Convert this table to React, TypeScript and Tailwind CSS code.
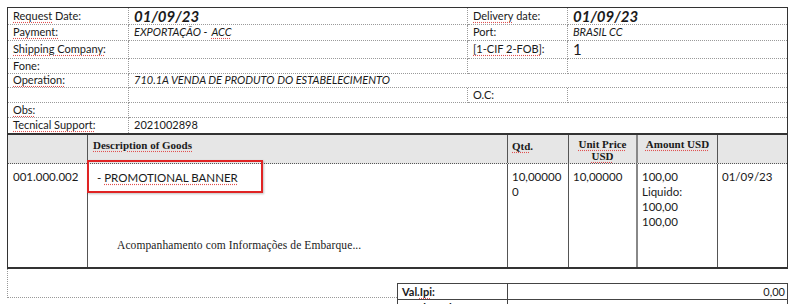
import type { ReactNode } from 'react'

// spell-check style underline seen on the printed form
const spell = 'underline decoration-dotted decoration-[#e05050] underline-offset-2'
const sans = "font-['Lato','Liberation_Sans',sans-serif]"
const serif = "font-['Liberation_Serif','Times_New_Roman',serif]"

const Cell = ({ children, className = '' }: { children?: ReactNode; className?: string }) => (
  <div className={`flex items-center px-[5px] border-b border-dotted border-[#9a9a9a] ${className}`}>
    {children}
  </div>
)

export default function App() {
  return (
    <div className={`w-[800px] h-[304px] overflow-hidden bg-white text-[#1a1a1a] ${sans} text-[11px]`}>
      <div className="pt-[7px] pl-[7px]">
        {/* header block */}
        <div className="w-[781px] border-t border-l border-r border-[#333]">
          <div className="grid grid-cols-[121px_339px_100px_219px] [grid-template-rows:17px_16px_18px_15px_14px_15px_15px_15px]">
            <Cell className="border-r"><span className={spell}>Request</span>&nbsp;Date:</Cell>
            <Cell className="border-r text-[15px] font-bold italic">01/09/23</Cell>
            <Cell className="border-r"><span className={spell}>Delivery</span>&nbsp;date:</Cell>
            <Cell className="text-[15px] font-bold italic">01/09/23</Cell>

            <Cell className="border-r"><span className={spell}>Payment:</span></Cell>
            <Cell className="border-r italic">EXPORTAÇÃO - <span className={`ml-1 ${spell}`}>ACC</span></Cell>
            <Cell className="border-r">Port:</Cell>
            <Cell className="italic">BRASIL CC</Cell>

            <Cell className="border-r !items-start"><span className={spell}>Shipping Company:</span></Cell>
            <Cell className="border-r" />
            <Cell className="border-r !items-start"><span className={spell}>[1-CIF 2-FOB]</span>:</Cell>
            <Cell className="text-[15px]">1</Cell>

            <Cell className="border-r">Fone:</Cell>
            <Cell className="border-r" />
            <Cell className="border-r" />
            <Cell />

            <Cell className="border-r"><span className={spell}>Operation:</span></Cell>
            <Cell className="col-span-3 italic">710.1A VENDA DE PRODUTO DO ESTABELECIMENTO</Cell>

            <Cell className="border-r" />
            <Cell className="border-r" />
            <Cell className="border-r">O.C:</Cell>
            <Cell />

            <Cell className="border-r"><span className={spell}>Obs:</span></Cell>
            <Cell className="col-span-3" />

            <Cell className="border-r !border-b-0"><span className={spell}>Tecnical Support:</span></Cell>
            <Cell className="col-span-3 !border-b-0">2021002898</Cell>
          </div>
        </div>

        {/* goods table */}
        <div className="w-[781px] border-t-2 border-b-2 border-l border-r border-[#333]">
          <div className={`grid grid-cols-[80px_420px_61px_69px_80px_69px] h-[29px] bg-[#e6e6e6] border-b border-dotted border-[#555] ${serif} font-bold text-[11px] leading-[12px]`}>
            <div className="border-r border-[#555]" />
            <div className="border-r border-[#555] pl-[5px] pt-[4px]"><span className={spell}>Description of Goods</span></div>
            <div className="border-r border-[#555] pl-[4px] pt-[5px]"><span className={spell}>Qtd</span>.</div>
            <div className="border-r-2 border-[#888] pt-[3px] text-center">
              <span className={spell}>Unit Price</span>
              <br />
              <span className={spell}>USD</span>
            </div>
            <div className="border-r border-[#555] pt-[3px] text-center"><span className={spell}>Amount USD</span></div>
            <div />
          </div>
          <div className="grid grid-cols-[80px_420px_61px_69px_80px_69px] h-[103px] leading-[15px] text-[11.5px]">
            <div className="border-r border-[#555] pl-[5px] pt-[5px]">001.000.002</div>
            <div className="relative border-r border-[#555] pl-[9px] pt-[6px]">
              <div>- <span className={spell}>PROMOTIONAL BANNER</span></div>
              <div className={`mt-[53px] pl-[20px] ${serif} text-[11.5px] tracking-[0.1px]`}>
                Acompanhamento com Informações de Embarque...
              </div>
              <div className="absolute left-[-1px] top-[-4px] w-[176px] h-[33px] border-2 border-[#e02424] shadow-[1px_1px_2px_rgba(0,0,0,0.25)]" />
            </div>
            <div className="border-r border-[#555] pl-[4px] pt-[5px]">
              10,00000
              <br />0
            </div>
            <div className="border-r-2 border-[#888] pl-[4px] pt-[5px]">10,00000</div>
            <div className="border-r border-[#555] pl-[4px] pt-[5px]">
              100,00
              <br />
              Liquido:
              <br />
              100,00
              <br />
              100,00
            </div>
            <div className="pl-[4px] pt-[5px]">01/09/23</div>
          </div>
        </div>

        {/* totals */}
        <div className="flex">
          <div className="w-[390px] h-[29px] border-l border-b border-dotted border-[#999]" />
          <div className="mt-[14px] w-[391px]">
            <div className="grid grid-cols-[110px_281px] h-[17px] border border-[#444]">
              <div className="border-r border-[#444] pl-[4px] font-bold flex items-center">
                Val.<span className={spell}>Ipi</span>:
              </div>
              <div className="flex items-center justify-end pr-[4px]">0,00</div>
            </div>
            <div className="grid grid-cols-[110px_281px] h-[17px] border-x border-b border-[#444]">
              <div className="border-r border-[#444] pl-[4px] font-bold flex items-center">Total Produtos:</div>
              <div className="flex items-center justify-end pr-[4px]">100,00</div>
            </div>
          </div>
        </div>
      </div>
    </div>
  )
}
